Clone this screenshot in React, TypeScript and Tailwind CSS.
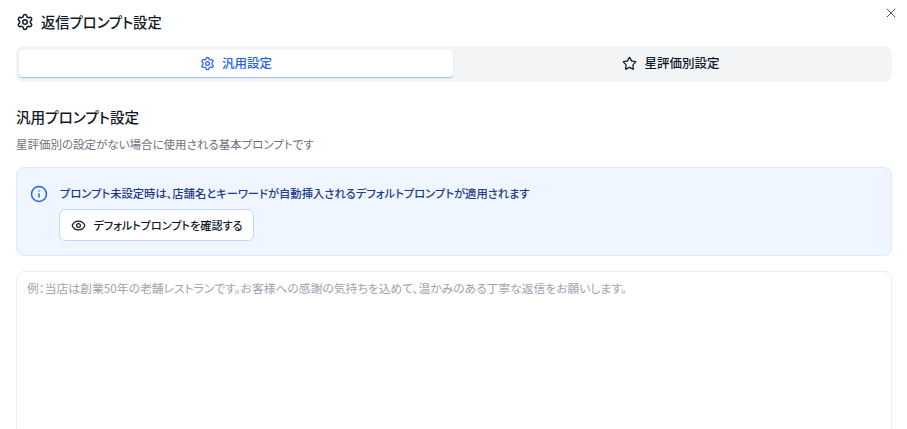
import { Eye, Info, Settings, Star, X } from 'lucide-react';

const fontStack = "font-['Noto_Sans_CJK_JP','Noto_Sans',sans-serif] [font-feature-settings:'palt']";

export default function App() {
  return (
    <div className={`relative h-[429px] w-[907px] overflow-hidden bg-white px-4 text-[#111827] ${fontStack}`}>
      {/* Close */}
      <button className="absolute right-[8px] top-[5px] text-[#4b5563]">
        <X className="h-4 w-4" strokeWidth={1.5} />
      </button>

      {/* Header */}
      <div className="flex h-[46px] items-center gap-[7px] pb-[2px]">
        <Settings className="h-[18px] w-[18px]" />
        <h2 className="text-[14.3px] font-medium leading-none">返信プロンプト設定</h2>
      </div>

      {/* Tabs */}
      <div className="flex h-9 w-[876px] rounded-lg bg-[#f3f4f6] p-[3px]">
        <button className="mt-px flex h-[27px] w-[434px] items-center justify-center gap-[7px] rounded-sm bg-white text-[12.5px] font-medium text-[#2563eb] shadow-[0_1px_1px_rgba(37,99,235,0.4)]">
          <Settings className="h-[15px] w-[15px]" />
          汎用設定
        </button>
        <button className="flex h-[28px] flex-1 items-center justify-center gap-[7px] text-[12.5px] font-medium">
          <Star className="h-[15px] w-[15px]" />
          星評価別設定
        </button>
      </div>

      {/* Section heading */}
      <h3 className="mt-[25px] text-[14.6px] font-medium leading-5">汎用プロンプト設定</h3>
      <p className="mt-[9px] text-[11.5px] leading-4 text-[#6b7280]">星評価別の設定がない場合に使用される基本プロンプトです</p>

      {/* Info box */}
      <div className="mt-[15px] flex h-[89px] w-[876px] gap-[11px] rounded-lg border border-[#dbeafe] bg-[#eff6ff] pl-[13px] pt-[17px]">
        <Info className="h-[18px] w-[18px] shrink-0 text-[#2563eb]" />
        <div>
          <p className="pl-px text-[11.3px] font-medium leading-4 text-[#1e3a8a]">プロンプト未設定時は、店舗名とキーワードが自動挿入されるデフォルトプロンプトが適用されます</p>
          <button className="mt-2 flex h-8 w-[195px] items-center justify-center gap-2 rounded-md border border-[#bfdbfe] bg-white text-[11.1px] font-medium">
            <Eye className="h-[15px] w-[15px]" />
            デフォルトプロンプトを確認する
          </button>
        </div>
      </div>

      {/* Prompt textarea */}
      <div className="mt-[15px] h-[180px] w-[876px] rounded-lg border border-[#eceef1] px-[10px] py-2 text-[11.8px] leading-4 text-[#9ca3af]">
        例：当店は創業50年の老舗レストランです。お客様への感謝の気持ちを込めて、温かみのある丁寧な返信をお願いします。
      </div>
    </div>
  );
}
